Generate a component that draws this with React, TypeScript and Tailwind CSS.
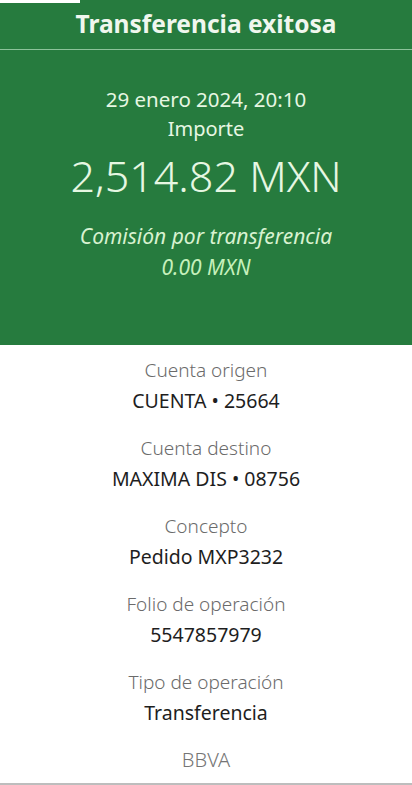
export default function App() {
  const rows: [string, string][] = [
    ["Cuenta origen", "CUENTA • 25664"],
    ["Cuenta destino", "MAXIMA DIS • 08756"],
    ["Concepto", "Pedido MXP3232"],
    ["Folio de operación", "5547857979"],
    ["Tipo de operación", "Transferencia"],
  ];
  return (
    <div className="w-[412px] h-[785px] bg-white overflow-hidden flex flex-col" style={{ fontFamily: "'Noto Sans', 'Open Sans', sans-serif" }}>
      <div className="bg-[#267b3e] h-[345px] flex flex-col items-center text-[#e6f7e2] relative">
        <div className="absolute left-0 top-0 w-[80px] h-[3px] bg-white" />
        <div className="h-[50px] w-full flex items-center justify-center text-[24.5px] font-bold text-[#f0f7ee] border-b border-[#8cc29a]">
          Transferencia exitosa
        </div>
        <div className="mt-[36px] text-[20.5px] leading-[26px]">29 enero 2024, 20:10</div>
        <div className="mt-[4px] text-[20px] leading-[26px]">Importe</div>
        <div className="mt-[10px] text-[43px] leading-[48px] font-light">2,514.82 MXN</div>
        <div className="mt-[23px] text-[21px] leading-[26px] italic text-[#d8f2d0]">Comisión por transferencia</div>
        <div className="mt-[5px] text-[21px] leading-[26px] italic text-[#c5f0bb]">0.00 MXN</div>
      </div>
      <div className="flex flex-col items-center pt-[12px]">
        {rows.map(([l, v]) => (
          <div key={l} className="flex flex-col items-center h-[78px]">
            <div className="text-[19px] leading-[26px] text-[#6b6b6b] font-light">{l}</div>
            <div className="mt-[5px] text-[19.5px] leading-[26px] text-[#1e1e1e]">{v}</div>
          </div>
        ))}
        <div className="text-[20px] leading-[26px] text-[#757575] font-light">BBVA</div>
      </div>
      <div className="mt-auto h-[2px] bg-[#bdbdbd]" />
    </div>
  );
}
